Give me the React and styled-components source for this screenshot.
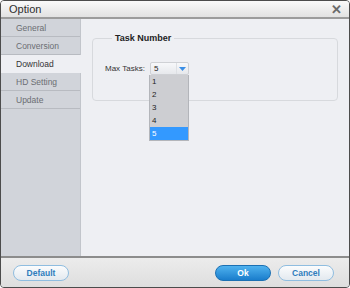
import React from 'react'
import styled, { createGlobalStyle } from 'styled-components'

const GlobalStyle = createGlobalStyle`
  html, body {
    margin: 0;
    padding: 0;
    background: #ffffff;
  }
  body {
    font-family: "Liberation Sans", Arial, sans-serif;
  }
`

const Window = styled.div`
  width: 350px;
  height: 288px;
  box-sizing: border-box;
  border: 1px solid #4c4c4c;
  border-radius: 4px;
  overflow: hidden;
  display: flex;
  flex-direction: column;
  background: #eeeff3;
`

const TitleBar = styled.div`
  height: 16px;
  flex: none;
  display: flex;
  align-items: center;
  justify-content: space-between;
  padding: 0 7px 0 8px;
  background: linear-gradient(#fafafa, #e2e2e2);
  border-bottom: 2px solid #9c9c9c;
`

const Title = styled.span`
  font-size: 11px;
  color: #2e2e2e;
`

const CloseButton = styled.span`
  font-size: 13px;
  font-weight: bold;
  color: #6a6a6a;
  line-height: 1;
`

const Body = styled.div`
  flex: 1;
  display: flex;
  min-height: 0;
`

const Sidebar = styled.div`
  width: 79px;
  flex: none;
  background: #d1d4da;
  border-right: 1px solid #c2c5cb;
  display: flex;
  flex-direction: column;
`

const NavItem = styled.div`
  height: 17px;
  display: flex;
  align-items: center;
  padding-left: 15px;
  font-size: 8.5px;
  color: ${props => (props.active ? '#333333' : '#6b6e73')};
  background: ${props => (props.active ? '#eeeff3' : 'transparent')};
  margin-right: ${props => (props.active ? '-1px' : '0')};
  border-bottom: 1px solid ${props => (props.active ? '#eeeff3' : '#b8bbc1')};
`

const Content = styled.div`
  flex: 1;
  padding: 14px 11px 0 11px;
`

const Group = styled.fieldset`
  margin: 0;
  height: 68px;
  box-sizing: border-box;
  border: 1px solid #d7d9dd;
  border-radius: 4px;
  padding: 19px 0 0 12px;
  position: relative;
`

const Legend = styled.legend`
  margin-left: 7px;
  padding: 0 3px;
  font-size: 9px;
  font-weight: bold;
  color: #222222;
`

const Row = styled.div`
  display: flex;
  align-items: center;
  gap: 5px;
`

const Label = styled.span`
  font-size: 8px;
  color: #333333;
`

const SelectWrap = styled.div`
  position: relative;
`

const SelectBox = styled.div`
  width: 39px;
  height: 13px;
  box-sizing: border-box;
  border: 1px solid #cfd1d5;
  border-radius: 2px;
  background: linear-gradient(#f7f8fa, #e6e8ec);
  display: flex;
  align-items: center;
  justify-content: space-between;
  padding-left: 3px;
  font-size: 8px;
  color: #222222;
`

const ArrowButton = styled.span`
  width: 11px;
  height: 11px;
  display: flex;
  align-items: center;
  justify-content: center;
  border-left: 1px solid #dde0e4;
`

const DropList = styled.div`
  position: absolute;
  left: -1px;
  top: 13px;
  width: 40px;
  box-sizing: border-box;
  background: #cdced2;
  border: 1px solid #b3b5ba;
  border-top: none;
  display: flex;
  flex-direction: column;
`

const DropItem = styled.div`
  height: 13px;
  display: flex;
  align-items: center;
  padding-left: 2px;
  font-size: 8px;
  color: ${props => (props.selected ? '#ffffff' : '#1e1e1e')};
  background: ${props => (props.selected ? '#3399ff' : 'transparent')};
`

const Footer = styled.div`
  height: 29px;
  flex: none;
  border-top: 2px solid #8c8c8c;
  background: linear-gradient(#ececec, #dedede);
  display: flex;
  align-items: center;
  justify-content: space-between;
  padding: 0 15px 0 12px;
`

const ButtonGroup = styled.div`
  display: flex;
  gap: 7px;
`

const Button = styled.button`
  width: 56px;
  height: 16px;
  border-radius: 8px;
  padding: 0;
  font-family: "Liberation Sans", Arial, sans-serif;
  font-size: 8.5px;
  font-weight: bold;
  cursor: pointer;
  border: 1px solid ${props => (props.primary ? '#1b70b3' : '#8fbde0')};
  color: ${props => (props.primary ? '#ffffff' : '#2e7dbd')};
  background: ${props =>
    props.primary
      ? 'linear-gradient(#4fb2ef, #1a7dcc)'
      : 'linear-gradient(#fbfcfd, #e3e9ef)'};
`

const navItems = ['General', 'Conversion', 'Download', 'HD Setting', 'Update']
const taskOptions = ['1', '2', '3', '4', '5']

const App = () => {
  return (
    <>
      <GlobalStyle />
      <Window>
        <TitleBar>
          <Title>Option</Title>
          <CloseButton>✕</CloseButton>
        </TitleBar>
        <Body>
          <Sidebar>
            {navItems.map(item => (
              <NavItem key={item} active={item === 'Download'}>
                {item}
              </NavItem>
            ))}
          </Sidebar>
          <Content>
            <Group>
              <Legend>Task Number</Legend>
              <Row>
                <Label>Max Tasks:</Label>
                <SelectWrap>
                  <SelectBox>
                    5
                    <ArrowButton>
                      <svg width="7" height="4" viewBox="0 0 7 4">
                        <path d="M0 0 L7 0 L3.5 4 Z" fill="#3a8ee6" />
                      </svg>
                    </ArrowButton>
                  </SelectBox>
                  <DropList>
                    {taskOptions.map(opt => (
                      <DropItem key={opt} selected={opt === '5'}>
                        {opt}
                      </DropItem>
                    ))}
                  </DropList>
                </SelectWrap>
              </Row>
            </Group>
          </Content>
        </Body>
        <Footer>
          <Button>Default</Button>
          <ButtonGroup>
            <Button primary>Ok</Button>
            <Button>Cancel</Button>
          </ButtonGroup>
        </Footer>
      </Window>
    </>
  )
}

export default App
